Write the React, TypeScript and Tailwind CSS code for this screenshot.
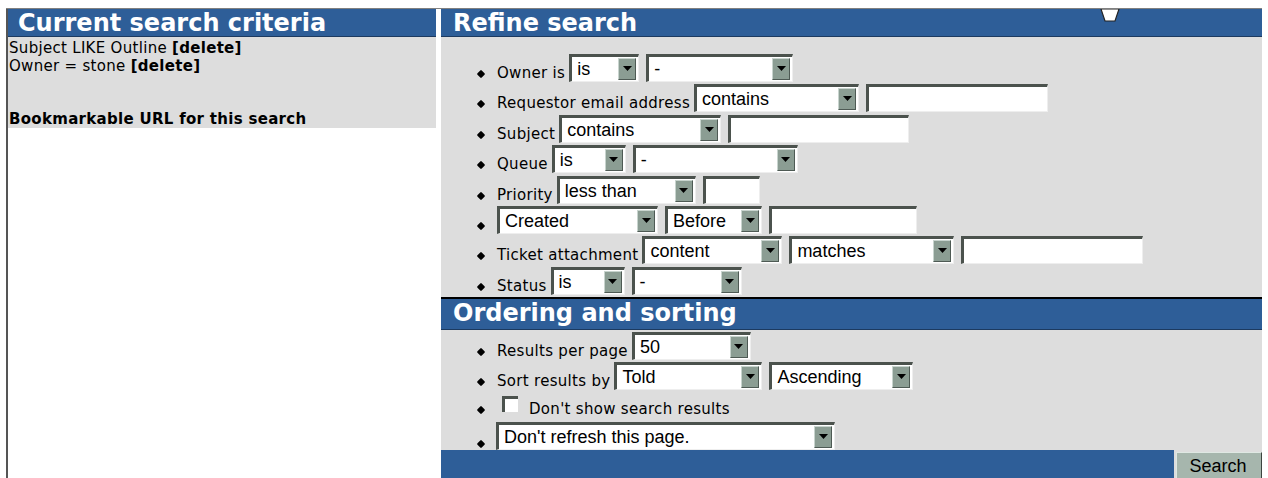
const label = "font-['DejaVu_Sans',Verdana,sans-serif] text-[15px] leading-[18px] tracking-[0.3px] text-black";
const ctl = "font-['Liberation_Sans',Arial,sans-serif] text-[18px] leading-[22px] text-black";

function Arrow() {
  return (
    <span className="flex h-[22px] w-[18px] shrink-0 items-center justify-center border border-t-[#c8d4ce] border-l-[#c8d4ce] border-r-[#4e5a54] border-b-[#4e5a54] bg-[#8b9d93]">
      <svg width="9" height="6" viewBox="0 0 9 6">
        <polygon points="0,0 9,0 4.5,5" fill="#000" />
      </svg>
    </span>
  );
}

function Select({ w, value }: { w: number; value: string }) {
  return (
    <span
      className="flex h-[28px] shrink-0 items-center justify-between border-t-[3px] border-l-[3px] border-r border-b border-t-[#4b524d] border-l-[#4b524d] border-r-[#eeeeee] border-b-[#eeeeee] bg-white pl-[5px] pr-[2px]"
      style={{ width: w }}
    >
      <span className={ctl}>{value}</span>
      <Arrow />
    </span>
  );
}

function Input({ w }: { w: number }) {
  return (
    <span
      className="block h-[28px] shrink-0 border-t-[3px] border-l-[3px] border-r border-b border-t-[#4b524d] border-l-[#4b524d] border-r-[#eeeeee] border-b-[#eeeeee] bg-white"
      style={{ width: w }}
    />
  );
}

function Row({ text, children }: { text?: string; children: React.ReactNode }) {
  return (
    <div className="flex h-[28px] items-end">
      <span className="mb-[5px] h-[6px] w-[6px] shrink-0 rotate-45 rounded-[1px] bg-black" />
      <span className={`ml-[13px] ${label} whitespace-nowrap`}>{text}</span>
      <div className={`${text ? "ml-[4px]" : ""} flex gap-[7px]`}>{children}</div>
    </div>
  );
}

function Header({ title, className = "" }: { title: string; className?: string }) {
  return (
    <div className={`relative h-[28px] bg-[#2e5e98] ${className}`}>
      <span className="pl-[12px] font-['DejaVu_Sans',Verdana,sans-serif] text-[24px] font-bold leading-[28px] text-white">
        {title}
      </span>
    </div>
  );
}

export default function App() {
  return (
    <div className="h-[478px] w-[1268px] overflow-hidden bg-white pt-[8px] pl-[6px]">
      <div className="flex h-full w-[1256px] border-t border-[#808080]">
        {/* current criteria */}
        <div className="flex w-[430px] flex-col border-l-2 border-[#555555]">
          <Header title="Current search criteria" className="pl-0 border-b border-[#1c3a60] [&>span]:pl-[10px]" />
          <div className={`h-[91px] bg-[#dddddd] pt-[2px] pl-[1px] ${label}`}>
            <div>
              Subject LIKE Outline <b>[delete]</b>
            </div>
            <div>
              Owner = stone <b>[delete]</b>
            </div>
            <div className="mt-[35px] font-bold">Bookmarkable URL for this search</div>
          </div>
        </div>

        {/* refine + ordering */}
        <div className="ml-[5px] flex w-[821px] flex-col bg-[#dddddd]">
          <div className="relative">
            <Header title="Refine search" className="border-b border-[#1c3a60]" />
            <svg className="absolute left-[659px] top-0" width="20" height="14" viewBox="0 0 20 14">
              <polygon points="1,0 19,0 15,12 5,12" fill="#fff" stroke="#222" strokeWidth="1.2" />
            </svg>
          </div>
          <div className="flex flex-col gap-[2.4px] pt-[17px] pl-[37px]">
            <Row text="Owner is">
              <Select w={70} value="is" />
              <Select w={147} value="-" />
            </Row>
            <Row text="Requestor email address">
              <Select w={165} value="contains" />
              <Input w={182} />
            </Row>
            <Row text="Subject">
              <Select w={162} value="contains" />
              <Input w={181} />
            </Row>
            <Row text="Queue">
              <Select w={74} value="is" />
              <Select w={165} value="-" />
            </Row>
            <Row text="Priority">
              <Select w={139} value="less than" />
              <Input w={57} />
            </Row>
            <Row>
              <Select w={161} value="Created" />
              <Select w={97} value="Before" />
              <Input w={148} />
            </Row>
            <Row text="Ticket attachment">
              <Select w={140} value="content" />
              <Select w={165} value="matches" />
              <Input w={182} />
            </Row>
            <Row text="Status">
              <Select w={74} value="is" />
              <Select w={110} value="-" />
            </Row>
          </div>

          <Header title="Ordering and sorting" className="mt-[2px] h-[33px] border-t-2 border-b border-t-black border-b-[#1c3a60] [&>span]:pl-[12px]" />
          <div className="flex flex-col gap-[2px] pt-[2px] pl-[37px]">
            <Row text="Results per page">
              <Select w={119} value="50" />
            </Row>
            <Row text="Sort results by">
              <Select w={148} value="Told" />
              <Select w={144} value="Ascending" />
            </Row>
            <div className="mt-[4px] flex h-[22px] items-end">
              <span className="mb-[5px] h-[6px] w-[6px] shrink-0 rotate-45 rounded-[1px] bg-black" />
              <span className="mb-[6px] ml-[18px] h-[16px] w-[16px] border-t-[3px] border-l-[3px] border-[#4b524d] bg-white" />
              <span className={`ml-[11px] ${label}`}>Don't show search results</span>
            </div>
            <div className="mt-[2px] flex h-[28px] items-end">
              <span className="mb-[3px] h-[6px] w-[6px] shrink-0 rotate-45 rounded-[1px] bg-black" />
              <div className="ml-[12px]">
                <Select w={339} value="Don't refresh this page." />
              </div>
            </div>
          </div>

          <div className="mt-auto flex h-[28px]">
            <div className="flex-1 bg-[#2e5e98]" />
            <button className="ml-[2px] mt-[2px] w-[86px] border border-l-[#dfe8e3] border-t-[#dfe8e3] border-r-[#3c4540] border-b-0 bg-[#a6b6ad] pr-[2px] font-['Liberation_Sans',Arial,sans-serif] text-[18px] leading-[24px] text-black">
              Search
            </button>
          </div>
        </div>
      </div>
    </div>
  );
}
